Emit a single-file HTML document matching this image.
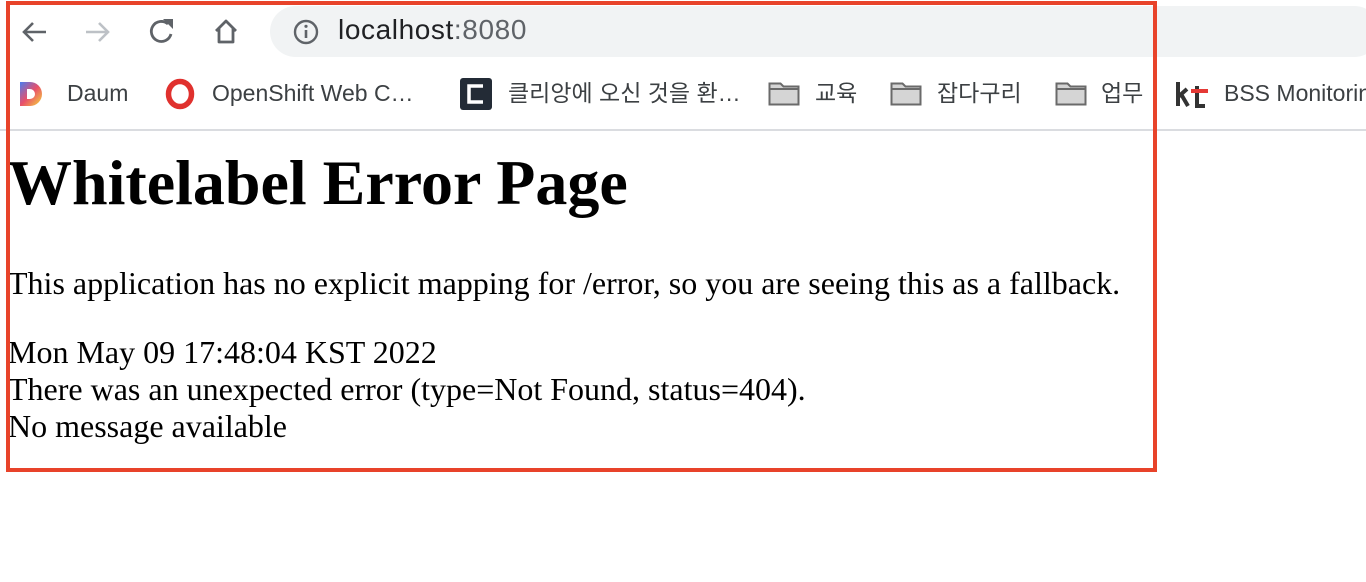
<!DOCTYPE html>
<html><head><meta charset="utf-8"><style>
*{margin:0;padding:0;box-sizing:border-box}
body{width:1366px;height:582px;background:#fff;position:relative;overflow:hidden;font-family:"Liberation Sans","Noto Sans CJK KR",sans-serif}
.a{position:absolute;white-space:nowrap}
.pill{left:270px;top:6px;width:1110px;height:51px;background:#f1f3f4;border-radius:26px}
.bm{font-size:23px;color:#3c4043;top:79px;line-height:28px}
.sep{left:0;top:129px;width:1366px;height:2px;background:#dadce0}
.t{font-family:"Liberation Serif","Noto Serif CJK SC",serif;color:#000;font-size:32px;line-height:37px;left:8px}
h1{position:absolute;left:8px;top:146px;font-family:"Liberation Serif",serif;font-size:64px;line-height:74px;font-weight:bold;white-space:nowrap}
.red{left:6px;top:1px;width:1151px;height:471px;border:4px solid #e8432a}
.fold{width:32px;height:24px}
</style></head><body>
<div class="a pill"></div>
<svg class="a" style="left:18px;top:16px" width="32" height="32" viewBox="0 0 32 32"><path d="M28 16H6M15 7l-9 9 9 9" fill="none" stroke="#5f6368" stroke-width="2.6"/></svg>
<svg class="a" style="left:82px;top:16px" width="32" height="32" viewBox="0 0 32 32"><path d="M4 16h22M17 7l9 9-9 9" fill="none" stroke="#bdc1c6" stroke-width="2.6"/></svg>
<svg class="a" style="left:146px;top:15px" width="32" height="32" viewBox="0 0 32 32"><path d="M25 19A10 10 0 1 1 22 9" fill="none" stroke="#5f6368" stroke-width="2.8"/><path d="M17 4h10v10z" fill="#5f6368"/></svg>
<svg class="a" style="left:210px;top:15px" width="32" height="32" viewBox="0 0 32 32"><path d="M6 16L16 6l10 10M9 13v14h14V13" fill="none" stroke="#5f6368" stroke-width="2.8" stroke-linejoin="round"/></svg>
<svg class="a" style="left:292px;top:18px" width="28" height="28" viewBox="0 0 28 28"><circle cx="14" cy="14" r="11" fill="none" stroke="#5f6368" stroke-width="2.4"/><path d="M14 12v8" stroke="#5f6368" stroke-width="2.6"/><circle cx="14" cy="8.3" r="1.6" fill="#5f6368"/></svg>
<div class="a" style="left:338px;top:13px;font-size:28px;line-height:34px;letter-spacing:0.6px;color:#202124">localhost<span style="color:#5f6368">:8080</span></div>

<svg class="a" style="left:18px;top:80px" width="28" height="28" viewBox="0 0 28 28"><defs><linearGradient id="g" x1="0" y1="0" x2="1" y2="1"><stop offset="0" stop-color="#4a7df0"/><stop offset=".5" stop-color="#e9506a"/><stop offset="1" stop-color="#f5d93a"/></linearGradient></defs><path d="M2 2h10a12 12 0 0 1 0 24H2z" fill="url(#g)"/><path d="M9 9h3a5 5 0 0 1 0 10H9z" fill="#fff"/></svg>
<div class="a bm" style="left:67px">Daum</div>
<svg class="a" style="left:164px;top:78px" width="32" height="32" viewBox="0 0 32 32"><ellipse cx="16" cy="16" rx="11.5" ry="12.5" fill="none" stroke="#e0312e" stroke-width="5.5"/></svg>
<div class="a bm" style="left:212px">OpenShift Web C…</div>
<svg class="a" style="left:460px;top:78px" width="32" height="32" viewBox="0 0 32 32"><rect width="32" height="32" rx="3" fill="#232b36"/><path d="M23 8H9v16h14" fill="none" stroke="#fff" stroke-width="3.5"/></svg>
<div class="a bm" style="left:508px">클리앙에 오신 것을 환…</div>
<svg class="a fold" style="left:768px;top:82px" viewBox="0 0 32 24"><path d="M1.5 1.5h11l3 3h15v18h-29z" fill="#d5d5d5" stroke="#6a6a6a" stroke-width="2"/><path d="M1.5 7h29" stroke="#6a6a6a" stroke-width="2"/></svg>
<div class="a bm" style="left:815px">교육</div>
<svg class="a fold" style="left:890px;top:82px" viewBox="0 0 32 24"><path d="M1.5 1.5h11l3 3h15v18h-29z" fill="#d5d5d5" stroke="#6a6a6a" stroke-width="2"/><path d="M1.5 7h29" stroke="#6a6a6a" stroke-width="2"/></svg>
<div class="a bm" style="left:937px">잡다구리</div>
<svg class="a fold" style="left:1055px;top:82px" viewBox="0 0 32 24"><path d="M1.5 1.5h11l3 3h15v18h-29z" fill="#d5d5d5" stroke="#6a6a6a" stroke-width="2"/><path d="M1.5 7h29" stroke="#6a6a6a" stroke-width="2"/></svg>
<div class="a bm" style="left:1101px">업무</div>
<svg class="a" style="left:1175px;top:80px" width="34" height="28" viewBox="0 0 34 28"><path d="M3 2v24M3 17l9-8M6 14l7 12" fill="none" stroke="#333" stroke-width="4"/><path d="M22 6v20h8" fill="none" stroke="#333" stroke-width="4"/><path d="M16 11h17" stroke="#e53935" stroke-width="4"/></svg>
<div class="a bm" style="left:1224px">BSS Monitoring</div>
<div class="a sep"></div>

<h1>Whitelabel Error Page</h1>
<div class="a t" style="top:265px">This application has no explicit mapping for /error, so you are seeing this as a fallback.</div>
<div class="a t" style="top:334px">Mon May 09 17:48:04 KST 2022</div>
<div class="a t" style="top:371px">There was an unexpected error (type=Not Found, status=404).</div>
<div class="a t" style="top:408px">No message available</div>
<div class="a red"></div>
</body></html>
